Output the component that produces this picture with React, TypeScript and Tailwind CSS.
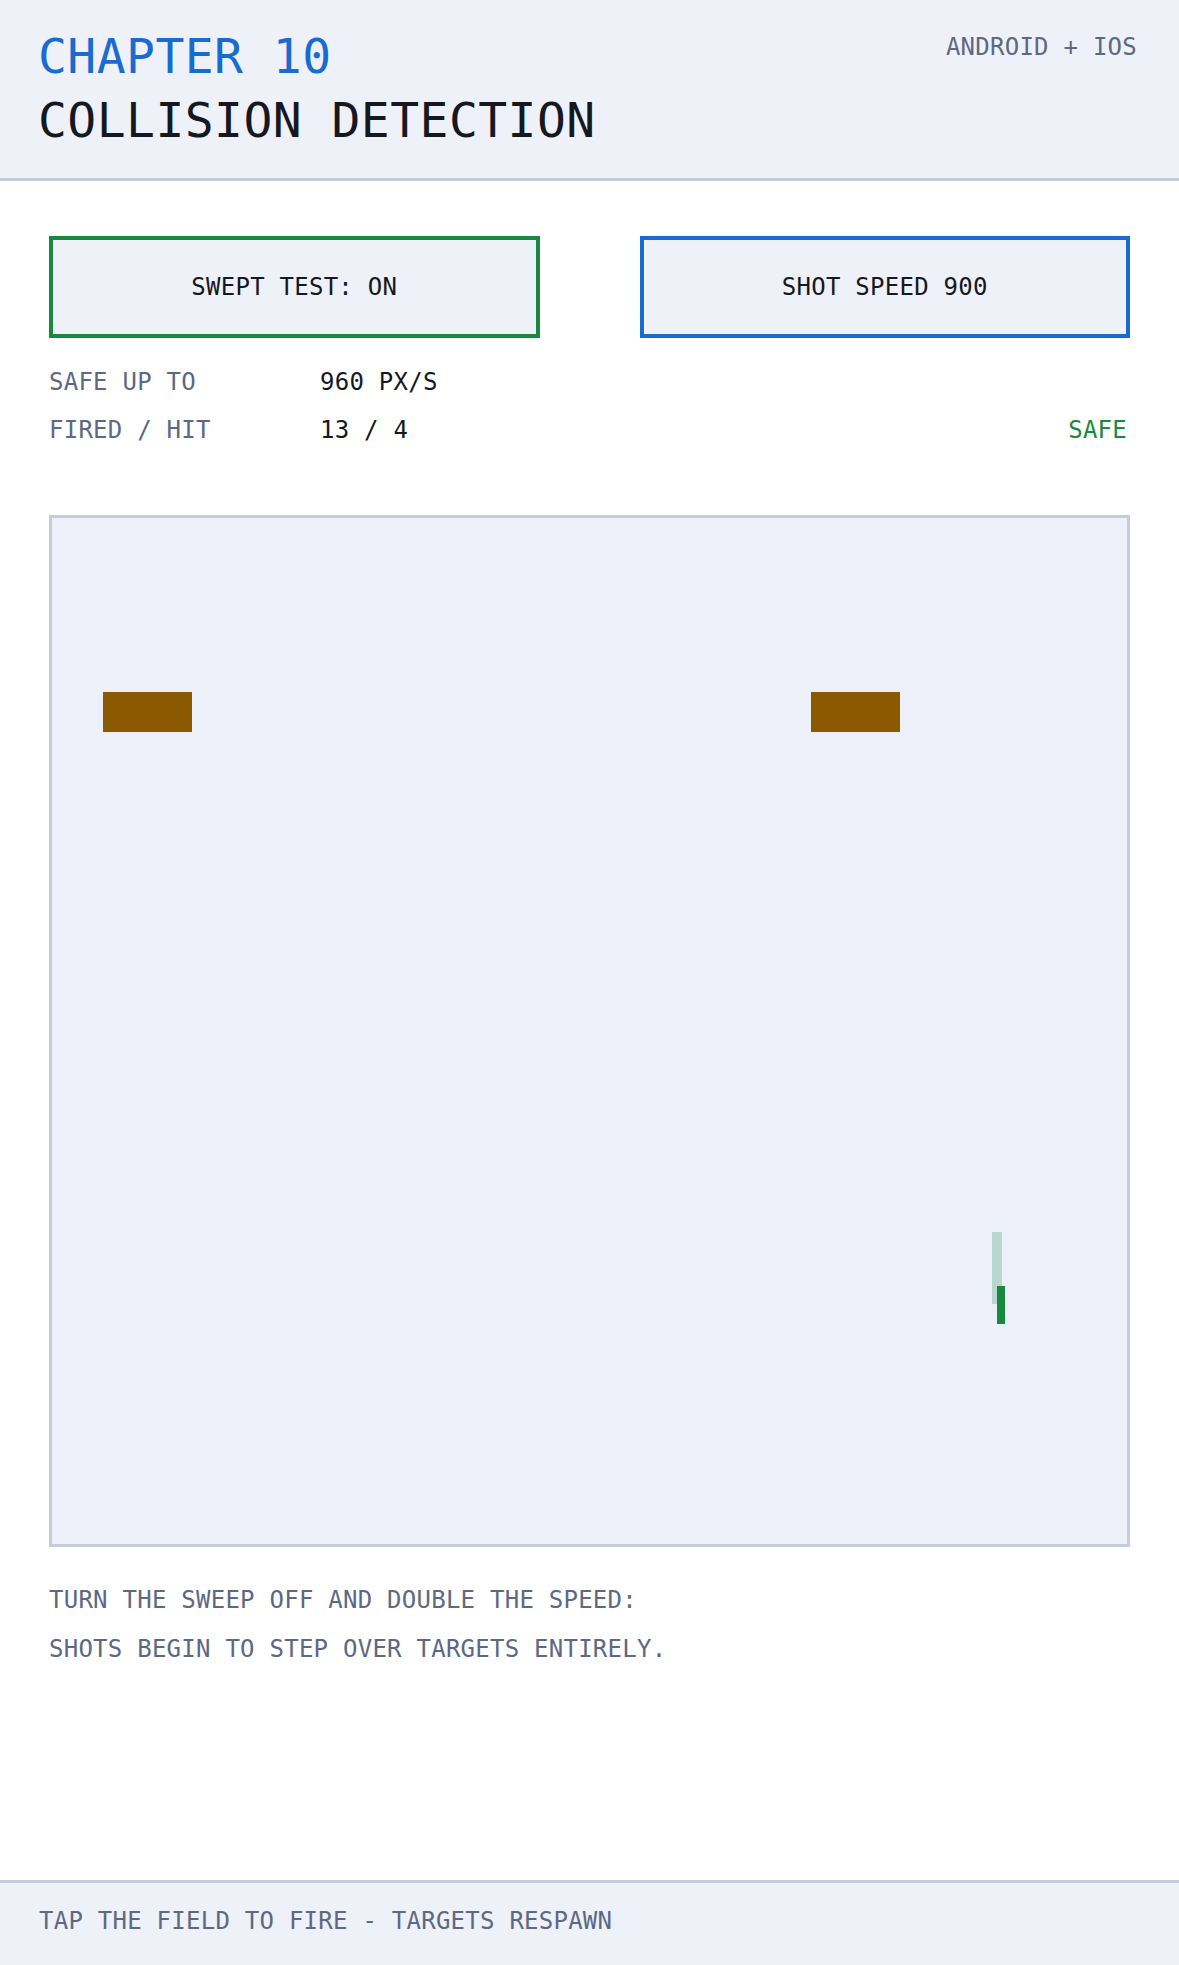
import React, { useState } from "react";

const mono = { fontFamily: '"DejaVu Sans Mono", "Liberation Mono", monospace' };

interface Target {
  id: number;
  left: number;
  top: number;
}

// Collision chapter screen
export default function App() {
  const [swept, setSwept] = useState(true);
  const [speed, setSpeed] = useState(900);
  const [fired, setFired] = useState(13);
  const [hit] = useState(4);

  const targets: Target[] = [
    { id: 1, left: 51, top: 174 },
    { id: 2, left: 759, top: 174 },
  ];

  const safe = swept || speed <= 960;

  return (
    <div className="min-h-[1965px] flex flex-col bg-white text-[#15181f] tracking-[0.25px]" style={mono}>
      {/* Header */}
      <header className="h-[181px] bg-[#eef1f8] border-b-[3px] border-[#c5cdd9] flex justify-between items-start pl-[38px] pr-[42px] pt-[24px]">
        <div className="text-[48px] leading-[64px] tracking-[0.45px]">
          <div className="text-[#1a6bd0]">CHAPTER 10</div>
          <div>COLLISION DETECTION</div>
        </div>
        <div className="text-[24px] leading-[32px] mt-[7px] text-[#5c6884]">ANDROID + IOS</div>
      </header>

      <main className="flex-1 px-[49px] pt-[55px]">
        {/* Controls */}
        <div className="grid grid-cols-2 gap-[100px]">
          <button
            onClick={() => setSwept(!swept)}
            className={`h-[102px] border-[4px] bg-[#eef1f8] text-[24px] ${
              swept ? "border-[#178a3f]" : "border-[#c5cdd9]"
            }`}
          >
            SWEPT TEST: {swept ? "ON" : "OFF"}
          </button>
          <button
            onClick={() => setSpeed(speed === 900 ? 1800 : 900)}
            className="h-[102px] border-[4px] border-[#1a6bd0] bg-[#eef1f8] text-[24px]"
          >
            SHOT SPEED {speed}
          </button>
        </div>

        {/* Stats */}
        <div className="mt-[20px] text-[24px] leading-[48px]">
          <div className="flex">
            <span className="w-[271px] text-[#5c6884]">SAFE UP TO</span>
            <span>960 PX/S</span>
          </div>
          <div className="flex">
            <span className="w-[271px] text-[#5c6884]">FIRED / HIT</span>
            <span className="flex-1">
              {fired} / {hit}
            </span>
            <span className={`pr-[3px] ${safe ? "text-[#178a3f]" : "text-[#c0392b]"}`}>
              {safe ? "SAFE" : "TUNNELING"}
            </span>
          </div>
        </div>

        {/* Field */}
        <div
          onClick={() => setFired(fired + 1)}
          className="relative mt-[61px] h-[1032px] border-[3px] border-[#c5cdd9] bg-[#edf0f8]"
        >
          {targets.map((t) => (
            <div
              key={t.id}
              className="absolute w-[89px] h-[40px] bg-[#8b5a00]"
              style={{ left: t.left, top: t.top }}
            />
          ))}
          {/* shot trail + shot */}
          <div className="absolute left-[940px] top-[714px] w-[10px] h-[72px] bg-[#b9d7cf]" />
          <div className="absolute left-[945px] top-[768px] w-[8px] h-[38px] bg-[#178a3f]" />
        </div>

        {/* Note */}
        <p className="mt-[29px] text-[24px] leading-[49px] text-[#5c6884]">
          TURN THE SWEEP OFF AND DOUBLE THE SPEED:
          <br />
          SHOTS BEGIN TO STEP OVER TARGETS ENTIRELY.
        </p>
      </main>

      {/* Footer */}
      <footer className="h-[85px] bg-[#eef1f8] border-t-[3px] border-[#c5cdd9] pl-[39px] pt-[22px] text-[24px] leading-[32px] text-[#5c6884]">
        TAP THE FIELD TO FIRE - TARGETS RESPAWN
      </footer>
    </div>
  );
}
